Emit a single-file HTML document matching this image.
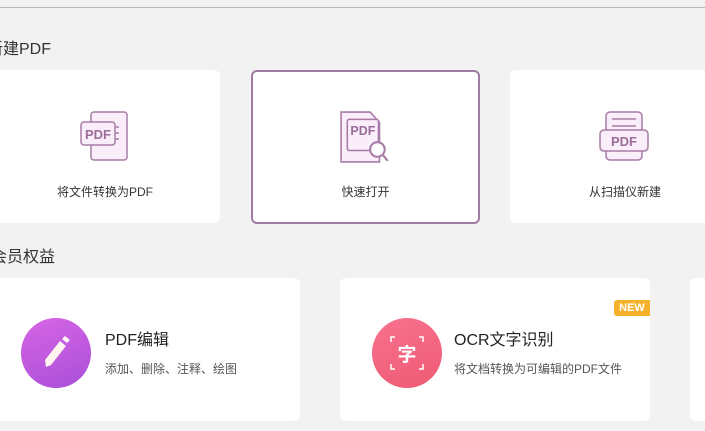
<!DOCTYPE html>
<html><head><meta charset="utf-8"><style>
body{margin:0;width:705px;height:431px;overflow:hidden;background:#f2f2f2;position:relative;font-family:"Liberation Sans","Noto Sans CJK SC",sans-serif;}
.line{position:absolute;left:0;top:7px;width:705px;height:1px;background:#b8b8b8}
.t{position:absolute;font-size:16px;color:#333}
.c{position:absolute;background:#fff;border-radius:6px;box-sizing:border-box}
.lb{position:absolute;left:0;right:0;top:113px;text-align:center;font-size:12px;color:#333}
.ic{position:absolute;left:50%;top:40px;margin-left:-26px}
.circ{position:absolute;width:70px;height:70px;border-radius:50%;top:40px}
.h{position:absolute;top:48px;font-size:16px;color:#222}
.s{position:absolute;top:82px;font-size:12px;color:#555}
</style></head><body>
<div class="line"></div>
<div class="t" style="left:-13px;top:35px">新建PDF</div>
<div class="c" style="left:-10px;top:70px;width:230px;height:153px">
<svg class="ic" width="52" height="52" viewBox="0 0 52 52" style="margin-left:-26px;left:114px">
<rect x="13" y="2" width="36" height="48" rx="3" fill="#fbeefb" stroke="#a77ba5" stroke-width="1.5"/>
<rect x="3" y="12" width="34" height="23" rx="3" fill="#fbeefb" stroke="#a77ba5" stroke-width="1.5"/>
<text x="20" y="29" font-size="13" font-weight="bold" fill="#9a6c98" text-anchor="middle" font-family="Liberation Sans">PDF</text>
<path d="M37 17h4M37 23h4M37 29h4" stroke="#a77ba5" stroke-width="1.5"/></svg>
<div class="lb">将文件转换为PDF</div></div>
<div class="c" style="left:251px;top:70px;width:229px;height:154px;border:2px solid #a07ba2">
<svg class="ic" width="54" height="54" viewBox="0 0 52 52" style="top:38px;margin-left:-27px">
<path d="M2 2h28l9 10v38H2z" fill="#fbeefb" stroke="#a77ba5" stroke-width="1.5"/>
<rect x="8" y="9" width="30" height="30" rx="2" fill="#fbeefb" stroke="#a77ba5" stroke-width="1.5"/>
<text x="23" y="24" font-size="12" font-weight="bold" fill="#9a6c98" text-anchor="middle" font-family="Liberation Sans">PDF</text>
<circle cx="37" cy="38" r="7" fill="#fff" stroke="#a77ba5" stroke-width="2"/><path d="M42 43l5 6" stroke="#a77ba5" stroke-width="2"/></svg>
<div class="lb" style="top:111px">快速打开</div></div>
<div class="c" style="left:510px;top:70px;width:230px;height:153px">
<svg class="ic" width="52" height="52" viewBox="0 0 52 52" style="left:115px">
<rect x="7" y="2" width="36" height="48" rx="4" fill="#fbeefb" stroke="#a77ba5" stroke-width="1.5"/>
<path d="M13 9h24M13 16h24" stroke="#a77ba5" stroke-width="1.5"/>
<rect x="1" y="20" width="48" height="21" rx="4" fill="#fbeefb" stroke="#a77ba5" stroke-width="1.5"/>
<text x="25" y="36" font-size="13" font-weight="bold" fill="#9a6c98" text-anchor="middle" font-family="Liberation Sans">PDF</text></svg>
<div class="lb">从扫描仪新建</div></div>
<div class="t" style="left:-9px;top:243px">会员权益</div>
<div class="c" style="left:-10px;top:278px;width:310px;height:143px">
<div class="circ" style="left:31px;background:linear-gradient(160deg,#d765e5,#a94fd8)"></div>
<svg style="position:absolute;left:46px;top:56px" width="40" height="40" viewBox="0 0 40 40"><path d="M10 33l-1-7 15-19 6 5-15 19z" fill="#fff4f0"/><path d="M26 5l3-3 5 4-3 3z" fill="#fff4f0"/></svg>
<div class="h" style="left:115px">PDF编辑</div><div class="s" style="left:115px">添加、删除、注释、绘图</div></div>
<div class="c" style="left:340px;top:278px;width:310px;height:143px">
<div class="circ" style="left:32px;background:linear-gradient(160deg,#f7728e,#ef5a74)"></div>
<svg style="position:absolute;left:47px;top:55px" width="40" height="40" viewBox="0 0 40 40"><path d="M4 9V4h4M32 4h4v5M4 31v5h4M32 36h4v-5" stroke="#fff" stroke-width="1.5" fill="none"/><text x="20" y="28" font-size="19" font-weight="bold" fill="#fff" text-anchor="middle" font-family="Noto Sans CJK SC">字</text></svg>
<div class="h" style="left:114px">OCR文字识别</div><div class="s" style="left:114px">将文档转换为可编辑的PDF文件</div>
<div style="position:absolute;left:274px;top:22px;width:36px;height:16px;background:#f6b12c;border-radius:3px 0 0 3px;color:#fff;font-size:11px;font-weight:bold;text-align:center;line-height:16px">NEW</div></div>
<div class="c" style="left:690px;top:278px;width:60px;height:143px"></div>
</body></html>
